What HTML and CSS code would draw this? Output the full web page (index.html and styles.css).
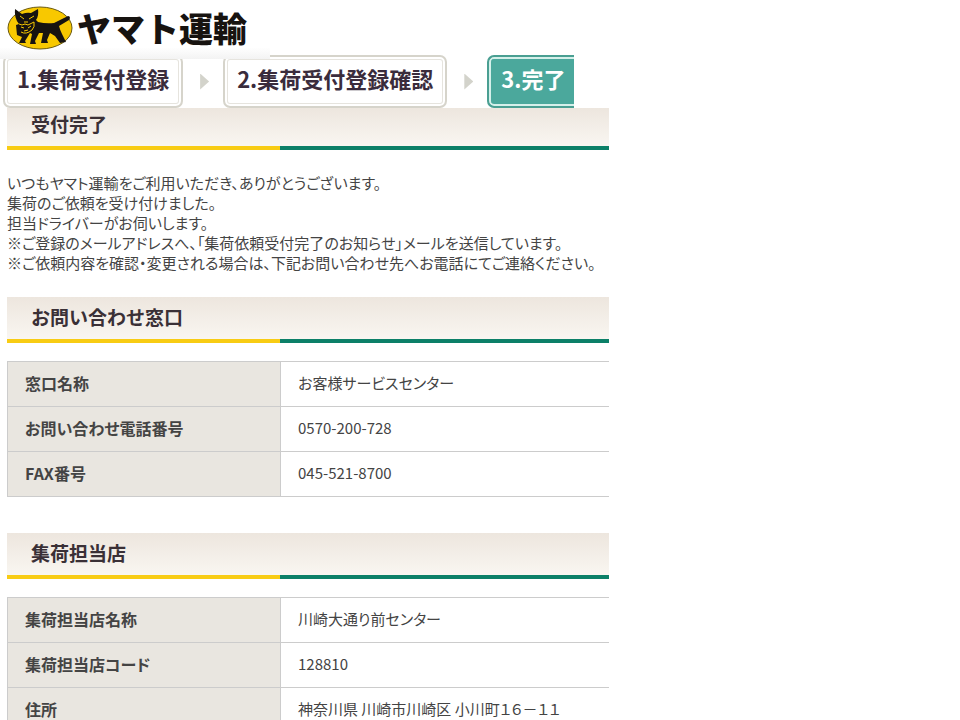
FILE: index.html
```html
<!DOCTYPE html>
<html lang="ja">
<head>
  <meta charset="UTF-8">
  <title>ヤマト運輸</title>
  <link rel="stylesheet" href="styles.css">
</head>
<body>
  <header class="header">
    <svg class="logo-mark" viewBox="0 0 66 46" aria-hidden="true">
      <ellipse cx="33" cy="23" rx="32" ry="21" fill="#f8c800" stroke="#6b5a10" stroke-width="1"/>
      <!-- parent cat -->
      <path fill="#171310" d="M8 4 L15 9 Q20 7 24 8 L31 4 Q32 11 29 15 L31 17 Q39 19 47 18 L61 11 Q63 11 63 13 L62 15 L52 21 Q53 25 55 29 L59 37 L53 38 L48 31 L43 28 L40 35 L41 38 L34 38 L36 28 L32 28 L28 36 L29 39 L23 39 L25 29 L23 28 L18 36 L19 38 L12 38 L15 32 L10 30 L9 20 L12 19 Q7 13 8 4 Z"/>
      <!-- faces -->
      <path fill="none" stroke="#f8c800" stroke-width="1" d="M12 19 L15 20 Q18 18 21 20 L27 17 M27 17 Q28 22 25 25 Q19 30 14 27 M13 11 L17 14 M22 14 L27 11 M14 22 L17 23 M21 23 L24 21 M17 26 L21 25 M17 17 L21 17"/>
    </svg>
    <h1 class="logo-text">ヤマト運輸</h1>
  </header>

  <main class="content">
    <ol class="steps">
      <li class="step">1.集荷受付登録</li>
      <li class="step">2.集荷受付登録確認</li>
      <li class="step current">3.完了</li>
    </ol>

    <h2 class="title title-top">受付完了</h2>
    <p class="message">
      いつもヤマト運輸をご利用いただき、ありがとうございます。<br>
      集荷のご依頼を受け付けました。<br>
      担当ドライバーがお伺いします。<br>
      ※ご登録のメールアドレスへ、「集荷依頼受付完了のお知らせ」メールを送信しています。<br>
      ※ご依頼内容を確認・変更される場合は、下記お問い合わせ先へお電話にてご連絡ください。
    </p>

    <h2 class="title">お問い合わせ窓口</h2>
    <table class="info">
      <tr><th scope="row">窓口名称</th><td>お客様サービスセンター</td></tr>
      <tr><th scope="row">お問い合わせ電話番号</th><td>0570-200-728</td></tr>
      <tr><th scope="row">FAX番号</th><td>045-521-8700</td></tr>
    </table>

    <h2 class="title">集荷担当店</h2>
    <table class="info">
      <tr><th scope="row">集荷担当店名称</th><td>川崎大通り前センター</td></tr>
      <tr><th scope="row">集荷担当店コード</th><td>128810</td></tr>
      <tr><th scope="row">住所</th><td>神奈川県 川崎市川崎区 小川町１６－１１</td></tr>
    </table>
  </main>
</body>
</html>
```

FILE: styles.css
```css
* {
  box-sizing: border-box;
}

body {
  margin: 0;
  background: #fff;
  color: #444;
  font-family: "Noto Sans CJK JP", sans-serif;
  font-size: 15px;
  line-height: 20px;
}

/* the header overlaps the top edge of the steps */
.header {
  position: relative;
  z-index: 1;
  display: flex;
  align-items: center;
  gap: 4px;
  width: 270px;
  height: 59px;
  padding: 0 7px 4px;
  background: linear-gradient(#fff 80%, #f3f3f3);
}

.logo-mark {
  width: 66px;
  height: 46px;
}

.logo-text {
  margin: 0;
  color: #171310;
  font-size: 34px;
  font-weight: 900;
  line-height: 46px;
  white-space: nowrap;
}

.content {
  max-width: 609px;
  padding-left: 7px;
}

.steps {
  display: flex;
  margin: -4px 0 0 -4px;
  padding: 0;
  list-style: none;
}

.step {
  display: flex;
  align-items: center;
  height: 53px;
  padding: 0 12px 8px;
  border: 2px solid #d6d4cb;
  border-radius: 7px;
  box-shadow: inset 0 0 0 2px #fff, inset 0 0 0 3px #e6e4de;
  color: #3a2c3c;
  font-size: 22px;
  font-weight: bold;
  white-space: nowrap;
}

.step + .step {
  margin-left: 40px;
}

.step + .step::before {
  content: "";
  width: 9px;
  height: 16px;
  margin: 8px 28px 0 -37px;
  background: #d3d3cb;
  clip-path: polygon(0 0, 100% 50%, 0 100%);
}

.step.current {
  padding-right: 9px;
  border-color: #4a9f92;
  border-right: none;
  border-radius: 7px 0 0 7px;
  background: #4ba89c;
  box-shadow: inset 2px 0 0 #d5f0ea, inset 0 2px 0 #d5f0ea, inset 0 -2px 0 #d5f0ea;
  color: #fff;
}

.title {
  margin: 0;
  padding: 10px 24px 12px;
  border-bottom: 4px solid;
  border-image: linear-gradient(to right, #f8cc14 273px, #0c8068 273px) 4;
  background: linear-gradient(#ede6de, #f9f6f1);
  color: #3a3036;
  font-size: 19px;
  font-weight: bold;
}

.title-top {
  padding-top: 6px;
}

.message {
  margin: 23px 0 24px;
  font-feature-settings: "palt";
  white-space: nowrap;
}

.info {
  width: 100%;
  margin: 18px 0 36px;
  border-collapse: collapse;
  table-layout: fixed;
}

.info th,
.info td {
  height: 45px;
  padding: 0 17px 2px;
  border: 1px solid #ccc;
  font-feature-settings: "palt";
  text-align: left;
}

.info th {
  width: 273px;
  background: #e9e6e0;
  font-size: 16px;
}

.info td {
  border-right: none;
}
```
